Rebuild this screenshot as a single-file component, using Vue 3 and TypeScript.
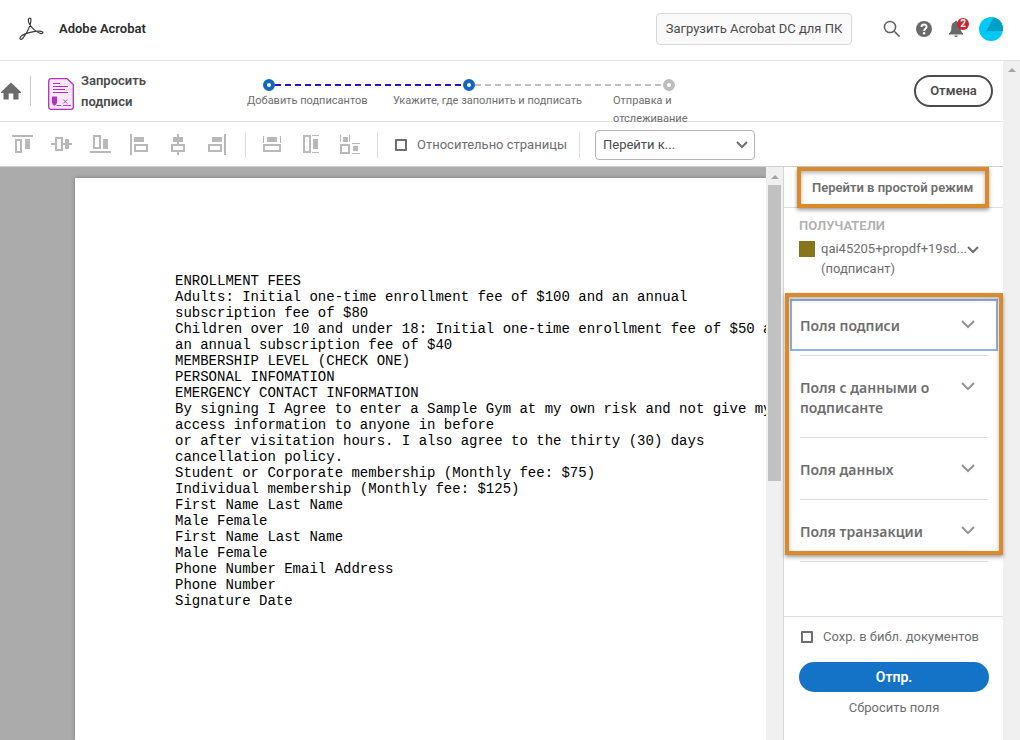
<script setup lang="ts">
import { ref } from 'vue'

interface Shape {
  x: number
  y: number
  w: number
  h: number
  hollow?: boolean
}

interface Tool {
  label: string
  shapes: Shape[]
}

const box = (x: number, y: number, w: number, h: number): Shape => ({ x, y, w, h })
const frame = (x: number, y: number, w: number, h: number): Shape => ({
  x: x + 1,
  y: y + 1,
  w: w - 2,
  h: h - 2,
  hollow: true,
})

const alignTools: Tool[] = [
  { label: 'По верхнему краю', shapes: [box(0, 1, 21, 2), frame(3, 5, 7, 14), box(13, 5, 5, 10)] },
  { label: 'По середине', shapes: [box(0, 9, 21, 2), frame(4, 3, 8, 14), box(14, 5, 4, 10)] },
  { label: 'По нижнему краю', shapes: [box(0, 17, 21, 2), frame(3, 1, 8, 14), box(13, 5, 5, 10)] },
  { label: 'По левому краю', shapes: [box(1, 0, 2, 21), box(5, 3, 10, 5), frame(5, 10, 14, 8)] },
  { label: 'По центру', shapes: [box(9, 0, 2, 21), box(5, 3, 10, 5), frame(3, 10, 14, 8)] },
  { label: 'По правому краю', shapes: [box(17, 0, 2, 21), box(5, 3, 10, 5), frame(1, 10, 14, 8)] },
]

const sizeTools: Tool[] = [
  { label: 'Одинаковая ширина', shapes: [box(2, 2, 1, 7), box(19, 2, 1, 7), box(6, 3, 10, 5), frame(2, 10, 18, 8)] },
  { label: 'Одинаковая высота', shapes: [frame(3, 1, 8, 18), box(12, 1, 7, 1), box(12, 18, 7, 1), box(13, 5, 5, 10)] },
  {
    label: 'Одинаковый размер',
    shapes: [
      box(1, 1, 1, 7), box(10, 1, 1, 7), box(4, 3, 5, 5), frame(1, 10, 10, 10),
      box(13, 9, 8, 1), box(13, 19, 8, 1), box(14, 12, 5, 5),
    ],
  },
]

const toolGroups: Tool[][] = [alignTools, sizeTools]

const steps = ['Добавить подписантов', 'Укажите, где заполнить и подписать', 'Отправка и отслеживание']

const lines = [
  'ENROLLMENT FEES',
  'Adults: Initial one-time enrollment fee of $100 and an annual',
  'subscription fee of $80',
  'Children over 10 and under 18: Initial one-time enrollment fee of $50 and',
  'an annual subscription fee of $40',
  'MEMBERSHIP LEVEL (CHECK ONE)',
  'PERSONAL INFOMATION',
  'EMERGENCY CONTACT INFORMATION',
  'By signing I Agree to enter a Sample Gym at my own risk and not give my',
  'access information to anyone in before',
  'or after visitation hours. I also agree to the thirty (30) days',
  'cancellation policy.',
  'Student or Corporate membership (Monthly fee: $75)',
  'Individual membership (Monthly fee: $125)',
  'First Name Last Name',
  'Male Female',
  'First Name Last Name',
  'Male Female',
  'Phone Number Email Address',
  'Phone Number',
  'Signature Date',
]

const fieldGroups = ['Поля подписи', 'Поля с данными о подписанте', 'Поля данных', 'Поля транзакции']

const relative = ref(false)
const saveToLibrary = ref(false)
const jump = ref('')
</script>

<template>
  <div class="app">
    <header class="topbar">
      <svg class="logo" width="25" height="24" viewBox="0 0 25 24" fill="none" stroke="#3c3c3c" stroke-width="1.2" stroke-linecap="round" stroke-linejoin="round" aria-hidden="true">
        <path d="M10 1.4C11.4.5 12.2 1.6 11.9 4C11.4 8.5 7.4 16.4 4.3 20.6C2.7 22.8.8 22.7 1 21.2C1.3 19.2 6 16.7 11.2 15.4C16 14.2 22 13.7 23.6 15C24.6 16 23.2 17 21.2 16.4C17.6 15.4 12.1 10.8 10.1 6.2C9.2 4 9.1 2.2 10 1.4Z" />
      </svg>
      <span class="brand">Adobe Acrobat</span>
      <button class="download" type="button">Загрузить Acrobat DC для ПК</button>
      <button class="icon-btn search" type="button" aria-label="Поиск">
        <svg width="18" height="18" viewBox="0 0 18 18" fill="none" stroke="#5f5f5f" stroke-width="1.5"><circle cx="7" cy="7" r="5.6" /><path d="M11 11l5.6 5.6" /></svg>
      </button>
      <button class="icon-btn help" type="button" aria-label="Справка">
        <svg width="16" height="16" viewBox="0 0 16 16"><circle cx="8" cy="8" r="8" fill="#6a6a6a" /><path d="M5.5 6C5.5 2.7 10.6 2.8 10.6 5.8C10.6 7.8 8.1 7.8 8.1 10" fill="none" stroke="#fff" stroke-width="1.9" /><circle cx="8.1" cy="12.3" r="1.2" fill="#fff" /></svg>
      </button>
      <button class="icon-btn bell" type="button" aria-label="Уведомления">
        <svg width="16" height="18" viewBox="0 0 16 18" fill="#6a6a6a"><path d="M7 1.2C7 .5 9 .5 9 1.2V2C12 2.6 12.6 5 12.6 8C12.6 11 13.6 12.2 15 13.2V14.5H1V13.2C2.4 12.2 3.4 11 3.4 8C3.4 5 4 2.6 7 2ZM6.3 15.4H9.8C9.6 17.6 6.5 17.6 6.3 15.4Z" /></svg>
        <span class="badge">2</span>
      </button>
      <button class="icon-btn" type="button" aria-label="Профиль">
        <svg width="24" height="24" viewBox="0 0 24 24"><circle cx="12" cy="12" r="12" fill="#00c8f5" /><path d="M14.5.3A12 12 0 0 1 23.9 14L7.2 14.2Z" fill="#00a0c6" /></svg>
      </button>
    </header>

    <div class="body">
      <main class="main">
        <div class="subbar">
          <a class="home" href="#" aria-label="Домой">
            <svg width="21" height="18" viewBox="0 0 21 18" fill="#6b6b6b"><path d="M11 .5L21 10V11H18.5V17.5H13.3V11.5H8.7V17.5H3.5V11H1V10Z" /></svg>
          </a>
          <div class="title">
            <svg width="26" height="32" viewBox="0 0 26 32" fill="none" stroke="#b130bd" aria-hidden="true">
              <path d="M3 .7H19L25.3 6.5V29A2.3 2.3 0 0 1 23 31.3H3A2.3 2.3 0 0 1 .7 29V3A2.3 2.3 0 0 1 3 .7Z" fill="#fbe9fb" stroke-width="1.3" />
              <path d="M5 5.5H12M5 8.5H20M5 11.5H17M5 14.5H20" />
              <path d="M4 18.5H9V25L7.2 27.5H5.8L4 25Z" fill="#b130bd" stroke="none" />
              <path d="M8.5 27.5H13M15 27.5H23M15.2 21.5L19.2 25.5M19.2 21.5L15.2 25.5" stroke-width=".9" />
            </svg>
            <span>Запросить<br />подписи</span>
          </div>
          <div class="stepper">
            <div class="track">
              <i class="dot"></i><i class="dash"></i><i class="dot"></i><i class="dash pending"></i><i class="dot pending"></i>
            </div>
            <ol class="labels">
              <li v-for="s in steps" :key="s">{{ s }}</li>
            </ol>
          </div>
          <button class="cancel" type="button">Отмена</button>
        </div>

        <div class="toolbar">
          <template v-for="(group, g) in toolGroups" :key="g">
            <div class="tools">
              <button v-for="t in group" :key="t.label" type="button" class="tool" :aria-label="t.label">
                <svg width="22" height="22" viewBox="0 0 22 22">
                  <rect
                    v-for="(s, i) in t.shapes" :key="i" :x="s.x" :y="s.y" :width="s.w" :height="s.h"
                    :fill="s.hollow ? '#fff' : '#b9b9b9'" :stroke="s.hollow ? '#b9b9b9' : 'none'" stroke-width="2"
                  />
                </svg>
              </button>
            </div>
            <span class="sep"></span>
          </template>
          <label class="check"><input v-model="relative" type="checkbox" />Относительно страницы</label>
          <span class="sep last"></span>
          <div class="select">
            <select v-model="jump" aria-label="Перейти к">
              <option value="">Перейти к...</option>
            </select>
            <svg width="12" height="8" viewBox="0 0 12 8" fill="none" stroke="#6e6e6e" stroke-width="2"><path d="M1 1L6 6L11 1" /></svg>
          </div>
        </div>

        <div class="workspace">
          <section class="viewer">
            <article class="sheet">
              <p v-for="(l, i) in lines" :key="i">{{ l }}</p>
            </article>
          </section>
          <div class="scrollbar inner"><i class="arrow"></i><i class="thumb"></i></div>

          <aside class="side">
            <div class="mode">
              <button type="button">Перейти в простой режим</button>
            </div>
            <div class="recipients">
              <h2>ПОЛУЧАТЕЛИ</h2>
              <button class="recipient" type="button">
                <i class="swatch"></i>
                <span>qai45205+propdf+19sd...<br />(подписант)</span>
                <svg width="12" height="8" viewBox="0 0 12 8" fill="none" stroke="#6e6e6e" stroke-width="2"><path d="M1 1L6 6L11 1" /></svg>
              </button>
            </div>
            <div class="groups">
              <button v-for="(f, i) in fieldGroups" :key="f" type="button" class="group" :class="{ focused: i === 0 }">
                <span>{{ f }}</span>
                <svg width="14" height="9" viewBox="0 0 14 9" fill="none" stroke="#969696" stroke-width="2"><path d="M1 1L7 7L13 1" /></svg>
              </button>
            </div>
            <div class="finish">
              <label class="check"><input v-model="saveToLibrary" type="checkbox" />Сохр. в библ. документов</label>
              <button class="send" type="button">Отпр.</button>
              <button class="reset" type="button">Сбросить поля</button>
            </div>
          </aside>
        </div>
      </main>
      <div class="scrollbar"><i class="arrow"></i></div>
    </div>
  </div>
</template>

<style>
body {
  margin: 0;
}
</style>

<style scoped>
.app {
  display: flex;
  flex-direction: column;
  height: 100vh;
  overflow: hidden;
  background: #fff;
  color: #6e6e6e;
  font: 13px/20px Roboto, "Noto Sans", sans-serif;
}
.app *,
.app *::after {
  box-sizing: border-box;
}
button,
select {
  margin: 0;
  padding: 0;
  border: 0;
  background: none;
  color: inherit;
  font: inherit;
  cursor: pointer;
}
svg {
  display: block;
  flex: none;
}
.topbar {
  display: flex;
  align-items: center;
  flex: none;
  height: 61px;
  padding: 0 17px 2px 19px;
  border-bottom: 1px solid #e2e2e2;
}
.brand {
  margin: 0 auto 0 15px;
  color: #2c2c2c;
  font-weight: 600;
}
.download {
  width: 196px;
  height: 32px;
  margin-right: 31px;
  border: 1px solid #d8d8d8;
  border-radius: 4px;
  background: #fafafa;
  color: #4b4b4b;
}
.icon-btn {
  position: relative;
}
.search {
  margin-right: 15px;
}
.help {
  margin-right: 16px;
}
.bell {
  margin-right: 15px;
}
.badge {
  position: absolute;
  top: -2px;
  left: 9px;
  width: 12px;
  height: 12px;
  border-radius: 6px;
  background: #c9252d;
  color: #fff;
  font-size: 10px;
  font-weight: 700;
  line-height: 12px;
}
.body {
  display: flex;
  flex: 1;
  min-height: 0;
}
.main {
  display: flex;
  flex: 1;
  flex-direction: column;
  min-width: 0;
}
.scrollbar {
  display: flex;
  flex: none;
  flex-direction: column;
  align-items: center;
  width: 17px;
  padding-top: 7px;
  background: #f0f0f0;
}
.arrow {
  border: 4px solid transparent;
  border-top: 0;
  border-bottom: 4px solid #a3a3a3;
}
.inner {
  padding-top: 8px;
}
.thumb {
  width: 13px;
  height: 296px;
  margin-top: 6px;
  background: #c1c1c1;
}
.subbar {
  display: flex;
  flex: none;
  height: 61px;
  padding-right: 10px;
  border-bottom: 1px solid #e2e2e2;
}
.home {
  display: flex;
  align-items: center;
  height: 30px;
  margin-top: 15px;
  padding-right: 9px;
  border-right: 1px solid #cacaca;
}
.title {
  display: flex;
  gap: 7px;
  align-items: flex-start;
  width: 199px;
  margin-left: 17px;
  padding-top: 9px;
  color: #4b4b4b;
  font-weight: 600;
  line-height: 21px;
}
.title svg {
  margin-top: 8px;
}
.stepper {
  width: 460px;
  padding-top: 18px;
}
.track {
  display: flex;
  align-items: center;
  width: 412px;
  margin-left: 16px;
}
.dot {
  width: 12px;
  height: 12px;
  border: 4px solid #1066c0;
  border-radius: 6px;
}
.dash {
  flex: 1;
  height: 2px;
  background: repeating-linear-gradient(90deg, #2a0fd0 0 6px, transparent 6px 10px);
}
.dot.pending {
  border-color: #bdbdbd;
}
.dash.pending {
  background: repeating-linear-gradient(90deg, #c0c0c0 0 6px, transparent 6px 10px);
}
.labels {
  display: grid;
  grid-template-columns: 146px 220px 94px;
  margin: 0;
  padding: 1px 0 0;
  list-style: none;
  font-size: 11px;
  line-height: 18px;
}
.cancel {
  width: 79px;
  height: 32px;
  margin: 14px 0 0 auto;
  border: 2px solid #4b4b4b;
  border-radius: 16px;
  color: #4b4b4b;
  font-weight: 600;
}
.toolbar {
  display: flex;
  align-items: center;
  flex: none;
  height: 45px;
  padding: 2px 12px 0;
  border-bottom: 1px solid #cfcfcf;
}
.tools {
  display: flex;
  gap: 17px;
}
.sep {
  width: 1px;
  height: 26px;
  margin: 0 15px 0 16px;
  background: #dcdcdc;
}
.sep.last {
  margin-left: 12px;
}
.check {
  display: flex;
  align-items: center;
  gap: 10px;
}
.toolbar .check {
  margin-left: 2px;
  white-space: nowrap;
}
.check input {
  flex: none;
  width: 12px;
  height: 12px;
  margin: 0;
  border: 2px solid #6e6e6e;
  border-radius: 1px;
  appearance: none;
}
.check input:checked {
  background: #1473c6;
}
.select {
  display: grid;
  align-items: center;
  width: 160px;
}
.select > * {
  grid-area: 1 / 1;
}
.select select {
  width: 100%;
  height: 30px;
  padding: 0 7px;
  border: 1px solid #b5b5b5;
  border-radius: 4px;
  background: #fff;
  color: #4b4b4b;
  appearance: none;
}
.select svg {
  justify-self: end;
  margin-right: 7px;
  pointer-events: none;
}
.workspace {
  display: flex;
  flex: 1;
  min-height: 0;
}
.viewer {
  flex: 1;
  min-width: 0;
  padding: 11px 0 0 75px;
  overflow: hidden;
  background: #ababab;
}
.sheet {
  min-height: 100%;
  padding: 95px 0 0 100px;
  background: #fff;
  box-shadow: 0 0 4px rgba(0, 0, 0, 0.3);
  color: #000;
  font: 14px/16px "Liberation Mono", monospace;
  white-space: nowrap;
}
.sheet p {
  margin: 0;
}
.side {
  position: relative;
  display: flex;
  flex: none;
  flex-direction: column;
  width: 220px;
  border-left: 1px solid #d5d5d5;
}
.mode {
  position: relative;
  height: 41px;
  padding-left: 28px;
  border-bottom: 1px solid #dcdcdc;
  font-weight: 600;
  line-height: 42px;
}
.mode::after,
.groups::after {
  position: absolute;
  border: 4px solid #d98a2b;
  box-shadow: 0 2px 4px rgba(0, 0, 0, 0.4), inset 0 2px 4px rgba(0, 0, 0, 0.3);
  content: "";
  pointer-events: none;
}
.mode::after {
  inset: 0 14px -1px 13px;
}
.recipients {
  padding: 8px 15px 0;
}
.recipients h2 {
  margin: 0;
  color: #b0b0b0;
  font-size: 13px;
  font-weight: 600;
  line-height: 20px;
}
.recipient {
  display: flex;
  width: 100%;
  margin-top: 3px;
  text-align: left;
  white-space: nowrap;
}
.swatch {
  flex: none;
  width: 16px;
  height: 16px;
  margin: 2px 6px 0 0;
  background: #86751a;
}
.recipient svg {
  margin-top: 7px;
}
.groups {
  position: relative;
  margin-top: 15px;
  padding: 0 15px 0 16px;
}
.groups::after {
  inset: -1px 0 7px 1px;
}
.group {
  position: relative;
  display: flex;
  justify-content: space-between;
  width: 100%;
  padding: 22px 13px 19px 0;
  border-bottom: 1px solid #dcdcdc;
  font-family: "Noto Sans", sans-serif;
  font-size: 14px;
  font-weight: 600;
  text-align: left;
}
.group svg {
  margin-top: 4px;
}
.focused::after {
  position: absolute;
  inset: 5px -10px 4px -10px;
  border: 2px solid #94b2de;
  content: "";
}
.finish {
  display: flex;
  flex-direction: column;
  height: 124px;
  margin-top: auto;
  padding: 10px 14px 0 15px;
  border-top: 1px solid #dcdcdc;
}
.finish .check {
  padding-left: 2px;
}
.send {
  height: 30px;
  margin: 15px 0 6px;
  border-radius: 15px;
  background: #1473c6;
  color: #fff;
  font-size: 14px;
  font-weight: 600;
}
</style>
